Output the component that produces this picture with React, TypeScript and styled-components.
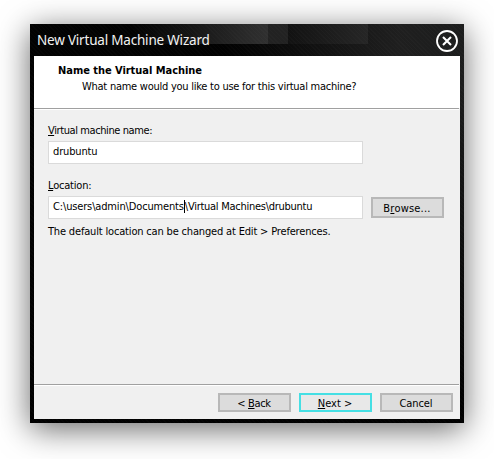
import React from "react";
import styled, { createGlobalStyle } from "styled-components";

const GlobalStyle = createGlobalStyle`
  * { box-sizing: border-box; }
  body { margin: 0; background: #fff; overflow: hidden; }
`;

const Desktop = styled.main`
  width: 494px;
  height: 459px;
  padding: 24px 30px 36px;
  overflow: hidden;
  background: #fff;
  color: #000;
  font: 11px/14px "DejaVu Sans Condensed", "DejaVu Sans", sans-serif;
  font-stretch: condensed;
`;

const Window = styled.section`
  display: flex;
  flex-direction: column;
  width: 434px;
  height: 399px;
  padding: 0 4px 4px;
  background:
    repeating-linear-gradient(45deg, rgba(255, 255, 255, 0.015) 0 1px, transparent 1px 3px),
    linear-gradient(90deg, transparent 100px, #303030 238px, #222 238px 258px, #121212 258px, #262626 338px, transparent 338px) 0 0 / 100% 20px no-repeat,
    linear-gradient(180deg, transparent 60px, #000 370px),
    linear-gradient(90deg, #020202 45%, #1f1f1f 85%, #1c1d1d);
  box-shadow: 0 6px 30px rgba(0, 0, 0, 0.6);
`;

const TitleBar = styled.header`
  display: flex;
  flex: 0 0 32px;
  justify-content: space-between;
  padding: 6px 2px 0 3px;
`;

const Title = styled.h1`
  margin: 0;
  color: #f2f2f2;
  font: 400 13.5px/20px "Noto Sans", sans-serif;
  letter-spacing: -0.2px;
  white-space: nowrap;
`;

const CloseButton = styled.button`
  width: 22px;
  height: 22px;
  padding: 0;
  border: 0;
  background: none;
  svg { display: block; }
`;

const Content = styled.div`
  display: flex;
  flex: 1;
  flex-direction: column;
  background: #f0f0f0;
`;

const Heading = styled.div`
  height: 52px;
  padding: 7px 24px 0;
  background: #fff;
`;

const Divider = styled.div`
  height: 2px;
  margin-right: 1px;
  border-top: 1px solid #a0a0a0;
  background: #fff;
`;

const Text = styled.div<{ $spacing?: number; $bold?: boolean; $indent?: number }>`
  height: 16px;
  line-height: 16px;
  padding-left: ${(p) => p.$indent ?? 0}px;
  font-weight: ${(p) => (p.$bold ? 700 : 400)};
  letter-spacing: ${(p) => p.$spacing ?? 0}px;
  white-space: pre;
`;

const Key = styled.span`
  text-decoration: underline;
  text-decoration-thickness: 1px;
  text-underline-offset: 1px;
  text-decoration-skip-ink: none;
`;

const Form = styled.div`
  flex: 1;
  padding: 12px 14px 0;
`;

const Field = styled.div`
  display: grid;
  grid-template-columns: 315px 73px;
  grid-template-rows: 19px 23px;
  column-gap: 8px;
  align-items: center;
  margin-bottom: 13px;
  &:last-of-type { margin-bottom: 5px; }
`;

const FieldGroup = styled.div``;

const Label = styled(Text).attrs({ as: "label" })`
  grid-column: 1 / -1;
  align-self: start;
  padding-top: 1px;
`;

const Input = styled.div`
  display: flex;
  height: 23px;
  padding: 2px 4px;
  border: 1px solid #dadada;
  background: #fff;
`;

const Caret = styled.i`
  width: 1px;
  height: 13px;
  margin: 1px 0 0;
  background: #000;
`;

const Button = styled.button<{ $primary?: boolean; $tall?: boolean }>`
  display: flex;
  justify-content: center;
  align-items: center;
  width: 73px;
  height: ${(p) => (p.$tall ? 21 : 19)}px;
  padding: 2px 1px 0 0;
  border: 2px solid ${(p) => (p.$primary ? "#45dfe4" : "#b8b8b8")};
  background: ${(p) => (p.$primary ? "#e8e8e8" : "#dcdcdc")};
  color: #000;
  font: inherit;
`;

const Footer = styled.footer`
  display: flex;
  justify-content: flex-end;
  gap: 8px;
  height: 33px;
  padding: 7px 7px 0 0;
`;

export default function App() {
  return (
    <Desktop>
      <GlobalStyle />
      <Window>
        <TitleBar>
          <Title>New Virtual Machine Wizard</Title>
          <CloseButton aria-label="Close">
            <svg width="22" height="22" viewBox="0 0 22 22" fill="none" stroke="#fff">
              <circle cx="11" cy="11" r="10" strokeWidth="1.8" />
              <path d="m7 7 8 8M15 7l-8 8" strokeWidth="2.1" />
            </svg>
          </CloseButton>
        </TitleBar>
        <Content>
          <Heading>
            <Text $bold $spacing={-0.04}>Name the Virtual Machine</Text>
            <Text $indent={24} $spacing={-0.25}>What name would you like to use for this virtual machine?</Text>
          </Heading>
          <Divider />
          <Form>
            <FieldGroup>
              <Field>
                <Label $spacing={-0.4}><Key>V</Key>irtual machine name:</Label>
                <Input><Text $spacing={-0.15}>drubuntu</Text></Input>
              </Field>
              <Field>
                <Label $spacing={-0.2}><Key>L</Key>ocation:</Label>
                <Input>
                  <Text $spacing={-0.15}>C:\users\admin\Documents</Text>
                  <Caret />
                  <Text $spacing={-0.27}>\Virtual Machines\drubuntu</Text>
                </Input>
                <Button $tall><Text $spacing={0.2}>B<Key>r</Key>owse...</Text></Button>
              </Field>
            </FieldGroup>
            <Text $spacing={-0.17}>The default location can be changed at Edit &gt; Preferences.</Text>
          </Form>
          <Divider />
          <Footer>
            <Button><Text $spacing={-0.35}>&lt; <Key>B</Key>ack</Text></Button>
            <Button $primary><Text>{" "}<Key>N</Key>ext &gt; </Text></Button>
            <Button><Text $spacing={-0.1}>Cancel</Text></Button>
          </Footer>
        </Content>
      </Window>
    </Desktop>
  );
}
